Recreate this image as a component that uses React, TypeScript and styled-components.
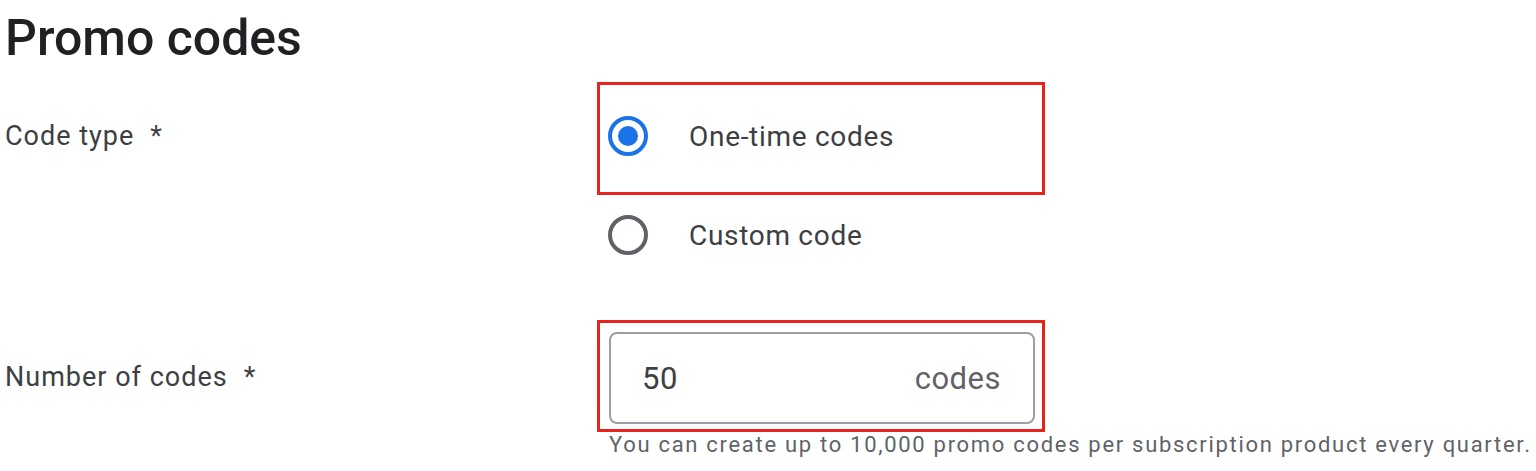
import styled, { createGlobalStyle } from "styled-components";

const GlobalStyle = createGlobalStyle`
  html, body {
    margin: 0;
    padding: 0;
    background: #ffffff;
  }
  body {
    font-family: Roboto, "Liberation Sans", Arial, sans-serif;
    color: #3c4043;
  }
`

const Page = styled.div`
  width: 1536px;
  height: 471px;
  overflow: hidden;
  padding: 9px 0 0 5px;
  box-sizing: border-box;
`

const Title = styled.h1`
  margin: 0;
  font-family: Roboto, sans-serif;
  font-size: 50px;
  font-weight: 500;
  line-height: 58px;
  color: #202124;
`

const FormRow = styled.div<{ $top: number }>`
  display: grid;
  grid-template-columns: 592px 1fr;
  margin-top: ${({ $top }) => $top}px;
`

const Label = styled.div<{ $pad: number }>`
  padding-top: ${({ $pad }) => $pad}px;
  font-size: 27px;
  line-height: 30px;
  letter-spacing: 1px;
  color: #3c4043;
  white-space: nowrap;
`

const Required = styled.span`
  margin-left: 16px;
`

const Column = styled.div`
  display: flex;
  flex-direction: column;
  align-items: flex-start;
`

const Highlight = styled.div<{ $pad: string }>`
  width: 448px;
  box-sizing: border-box;
  border: 3px solid #e8231d;
  padding: ${({ $pad }) => $pad};
`

const Option = styled.label<{ $inset: number }>`
  display: flex;
  align-items: center;
  height: 80px;
  padding-left: ${({ $inset }) => $inset}px;
  gap: 41px;
  font-size: 28px;
  letter-spacing: 0.7px;
  color: #3c4043;
  cursor: pointer;
`

const Radio = styled.span<{ $checked?: boolean }>`
  flex: none;
  width: 40px;
  height: 40px;
  box-sizing: border-box;
  border-radius: 50%;
  border: 4px solid ${({ $checked }) => ($checked ? "#1a73e8" : "#5f6368")};
  display: flex;
  align-items: center;
  justify-content: center;

  &::after {
    content: "";
    width: 20px;
    height: 20px;
    border-radius: 50%;
    background: #1a73e8;
    display: ${({ $checked }) => ($checked ? "block" : "none")};
  }
`

const Field = styled.div`
  height: 92px;
  box-sizing: border-box;
  border: 2px solid #9aa0a6;
  border-radius: 8px;
  display: flex;
  align-items: center;
  justify-content: space-between;
  padding: 0 32px 0 31px;
  font-size: 31px;
  letter-spacing: 0.5px;
`

const Value = styled.span`
  color: #3c4043;
`

const Suffix = styled.span`
  color: #5f6368;
`

const Hint = styled.div`
  margin-left: 12px;
  font-size: 22px;
  line-height: 26px;
  letter-spacing: 1.7px;
  color: #5f6368;
  white-space: nowrap;
`

export default function App() {
  return (
    <Page>
      <GlobalStyle />
      <Title>Promo codes</Title>

      <FormRow $top={15}>
        <Label $pad={39}>
          Code type<Required>*</Required>
        </Label>
        <Column>
          <Highlight $pad="11px 0 16px">
            <Option $inset={8}>
              <Radio $checked />
              One-time codes
            </Option>
          </Highlight>
          <Option $inset={11}>
            <Radio />
            Custom code
          </Option>
        </Column>
      </FormRow>

      <FormRow $top={45}>
        <Label $pad={42}>
          Number of codes<Required>*</Required>
        </Label>
        <Column>
          <Highlight $pad="9px 7px 5px 9px">
            <Field>
              <Value>50</Value>
              <Suffix>codes</Suffix>
            </Field>
          </Highlight>
          <Hint>You can create up to 10,000 promo codes per subscription product every quarter.</Hint>
        </Column>
      </FormRow>
    </Page>
  );
}
